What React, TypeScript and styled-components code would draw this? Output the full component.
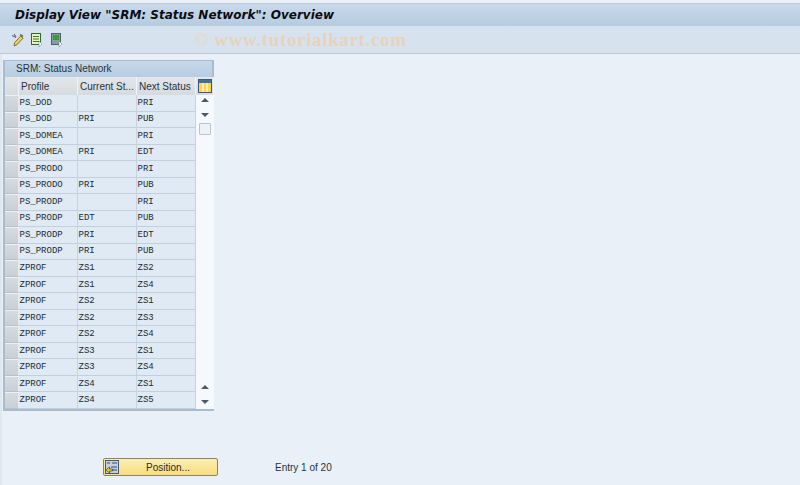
import styled, { createGlobalStyle } from "styled-components";

const GlobalStyle = createGlobalStyle`
  html, body {
    margin: 0;
    padding: 0;
    background: #e9f0f7;
    font-family: "Liberation Sans", Arial, sans-serif;
  }
`;

const rows = [
  ["PS_DOD", "", "PRI"],
  ["PS_DOD", "PRI", "PUB"],
  ["PS_DOMEA", "", "PRI"],
  ["PS_DOMEA", "PRI", "EDT"],
  ["PS_PRODO", "", "PRI"],
  ["PS_PRODO", "PRI", "PUB"],
  ["PS_PRODP", "", "PRI"],
  ["PS_PRODP", "EDT", "PUB"],
  ["PS_PRODP", "PRI", "EDT"],
  ["PS_PRODP", "PRI", "PUB"],
  ["ZPROF", "ZS1", "ZS2"],
  ["ZPROF", "ZS1", "ZS4"],
  ["ZPROF", "ZS2", "ZS1"],
  ["ZPROF", "ZS2", "ZS3"],
  ["ZPROF", "ZS2", "ZS4"],
  ["ZPROF", "ZS3", "ZS1"],
  ["ZPROF", "ZS3", "ZS4"],
  ["ZPROF", "ZS4", "ZS1"],
  ["ZPROF", "ZS4", "ZS5"],
];

const Screen = styled.div`
  width: 800px;
  height: 485px;
  overflow: hidden;
  display: flex;
  flex-direction: column;
  padding-top: 3px;
  box-sizing: border-box;
  background: #e9f0f7;
`;

const TitleBar = styled.div`
  height: 23px;
  flex: none;
  display: flex;
  align-items: center;
  padding-left: 15px;
  border-top: 1px solid #c3ccd6;
  box-sizing: border-box;
  background: linear-gradient(#c8d9ea, #b5cbe0);
`;

const Title = styled.h1`
  margin: 0;
  font: italic bold 12px "DejaVu Sans", Verdana, sans-serif;
  color: #0c0c10;
  white-space: nowrap;
`;

const Toolbar = styled.div`
  height: 28px;
  flex: none;
  display: flex;
  align-items: center;
  padding-left: 11px;
  gap: 6px;
  box-sizing: border-box;
  border-bottom: 1px solid #bcc8d3;
  background: #d6e2ee;
`;

const ToolIcon = styled.svg`
  width: 14px;
  height: 14px;
  flex: none;
`;

const Watermark = styled.span`
  margin-left: 123px;
  font: bold 19px "Liberation Serif", "Times New Roman", serif;
  letter-spacing: 0.65px;
  color: #e8d3ba;
  white-space: nowrap;
`;

const Copyright = styled.span`
  color: #e6d9c8;
`;

const Content = styled.main`
  flex: 1;
  min-height: 0;
  display: flex;
  flex-direction: column;
  align-items: flex-start;
  padding: 6px 0 0 3px;
  border-left: 2px solid #dfe7ef;
  box-sizing: border-box;
`;

const Panel = styled.section`
  width: 211px;
  height: 351px;
  margin-left: -2px;
  flex: none;
  display: flex;
  flex-direction: column;
  box-sizing: border-box;
  border: 1px solid #a9bccd;
  border-width: 1px 2px 2px 2px;
  background: #f2f6fa;
`;

const PanelTitle = styled.div`
  height: 16px;
  flex: none;
  display: flex;
  align-items: center;
  padding: 0 0 2px 11px;
  box-sizing: border-box;
  font-size: 10px;
  color: #27323d;
  background: linear-gradient(#c6d8e9, #b7cde2);
`;

const TableGrid = styled.div`
  flex: 1;
  min-height: 0;
  display: grid;
  grid-template-columns: 14px 59px 59px 59px 18px;
  grid-template-rows: 18px repeat(19, 1fr);
`;

const HeaderCell = styled.div<{ $corner?: boolean }>`
  display: flex;
  align-items: center;
  padding-left: ${(p) => (p.$corner ? 0 : "2px")};
  font-size: 10px;
  color: #27323d;
  white-space: nowrap;
  overflow: hidden;
  box-sizing: border-box;
  border-right: 1px solid #f1f4f7;
  background: linear-gradient(#e3e7eb, #d6dbe0);
`;

const RowHead = styled.div`
  box-sizing: border-box;
  border-top: 1px solid #eef1f4;
  border-bottom: 1px solid #b6c3cf;
  border-right: 1px solid #e6ebf0;
  background: linear-gradient(#d6dbe0, #c9cfd5);
`;

const Cell = styled.div`
  display: flex;
  align-items: center;
  padding-left: 0.5px;
  box-sizing: border-box;
  font: 9px "Liberation Mono", "Courier New", monospace;
  color: #202a33;
  white-space: nowrap;
  border-right: 1px solid #c6d4e0;
  border-bottom: 1px solid #c0d0de;
  background: #dfeaf4;
`;

const ScrollColumn = styled.div`
  grid-column: 5;
  grid-row: 2 / span 19;
  display: flex;
  flex-direction: column;
  align-items: center;
  background: #f6f9fb;
`;

const ColumnSetup = styled.svg`
  width: 14px;
  height: 14px;
  margin: 0 0 0 2px;
`;

const ScrollArrow = styled.div<{ $down?: boolean }>`
  width: 0;
  height: 0;
  margin-top: ${(p) => (p.$down ? "11px" : "3px")};
  border-left: 4px solid transparent;
  border-right: 4px solid transparent;
  ${(p) =>
    p.$down ? "border-top: 4px solid #4d5a66;" : "border-bottom: 4px solid #4d5a66;"}
`;

const ScrollThumb = styled.div`
  width: 12px;
  height: 12px;
  margin-top: 6px;
  box-sizing: border-box;
  border: 1px solid #b8c4cf;
  border-radius: 1px;
  background: #eef2f6;
`;

const ScrollSpacer = styled.div`
  flex: 1;
`;

const ScrollFoot = styled.div`
  flex: 0 0 5px;
`;

const Footer = styled.div`
  display: flex;
  align-items: center;
  margin-top: 47px;
  margin-left: 98px;
`;

const PositionButton = styled.button`
  width: 115px;
  height: 18px;
  padding: 0;
  display: flex;
  align-items: center;
  box-sizing: border-box;
  border: 1px solid #8c8465;
  border-radius: 2px;
  background: linear-gradient(#fbeeb4, #f9dd7e);
  font: 10px "Liberation Sans", Arial, sans-serif;
  color: #2b2b2b;
`;

const ButtonIcon = styled.svg`
  width: 14px;
  height: 14px;
  margin-left: 1px;
  flex: none;
`;

const ButtonLabel = styled.span`
  flex: 1;
  text-align: center;
`;

const EntryCount = styled.span`
  margin-left: 57px;
  font-size: 10px;
  color: #27323d;
`;

const SheetIcon = () => (
  <ToolIcon viewBox="0 0 14 14">
    <rect x="0.500" y="0.500" width="9" height="11" fill="#e6f0c4" stroke="#2f6a2a" />
    <path d="M2 3.500h6M2 6h6M2 8.500h6" stroke="#3f7a32" />
    <path d="M8 8l3 3-3 3z" fill="#ffffff" stroke="#6b7885" strokeWidth="0.5" />
  </ToolIcon>
);

const FilledSheetIcon = () => (
  <ToolIcon viewBox="0 0 14 14">
    <rect x="0.500" y="0.500" width="9" height="11" fill="#8a9aa6" stroke="#52616e" />
    <rect x="2" y="2" width="6" height="5" fill="#3f9a35" />
    <path d="M8 8l3 3-3 3z" fill="#ffffff" stroke="#6b7885" strokeWidth="0.5" />
  </ToolIcon>
);

export default function App() {
  return (
    <Screen>
      <GlobalStyle />
      <TitleBar>
        <Title>Display View "SRM: Status Network": Overview</Title>
      </TitleBar>
      <Toolbar>
        <ToolIcon viewBox="0 0 14 14">
          <path d="M1 2.500l4 2M3 1l2 3" stroke="#6a6f75" strokeWidth="1.200" />
          <path d="M9 1.500l3 2" stroke="#70757b" strokeWidth="1.800" />
          <path d="M3 13l.7-3.500 6-6.500 2.500 2-6 6.500z" fill="#f0cf55" stroke="#6a5a20" strokeWidth="0.8" />
        </ToolIcon>
        <SheetIcon />
        <FilledSheetIcon />
        <Watermark>
          <Copyright>©</Copyright> www.tutorialkart.com
        </Watermark>
      </Toolbar>
      <Content>
        <Panel>
          <PanelTitle>SRM: Status Network</PanelTitle>
          <TableGrid>
            <HeaderCell $corner />
            <HeaderCell>Profile</HeaderCell>
            <HeaderCell>Current St...</HeaderCell>
            <HeaderCell>Next Status</HeaderCell>
            <HeaderCell $corner>
              <ColumnSetup viewBox="0 0 14 14">
                <rect x="0.500" y="0.500" width="13" height="13" fill="#f6d65a" stroke="#3d5a78" />
                <rect x="1" y="1" width="12" height="3" fill="#3f6ea0" />
                <path d="M5 4v9M9 4v9" stroke="#ffffff" />
              </ColumnSetup>
            </HeaderCell>
            {rows.map((row, i) => (
              <div key={i} style={{ display: "contents" }}>
                <RowHead />
                {row.map((value, j) => (
                  <Cell key={j}>{value}</Cell>
                ))}
              </div>
            ))}
            <ScrollColumn>
              <ScrollArrow />
              <ScrollArrow $down />
              <ScrollThumb />
              <ScrollSpacer />
              <ScrollArrow />
              <ScrollArrow $down />
              <ScrollFoot />
            </ScrollColumn>
          </TableGrid>
        </Panel>
        <Footer>
          <PositionButton>
            <ButtonIcon viewBox="0 0 14 14">
              <rect x="0.500" y="0.500" width="13" height="13" fill="#c3d0de" stroke="#4a5a6a" />
              <path d="M2 3h3M7 3h5M6 7h6M6 10h6" stroke="#2f4f7a" />
              <path d="M1 10l3.500-3v2h3v2h-3v2z" fill="#f2d21f" stroke="#222" strokeWidth="0.6" />
            </ButtonIcon>
            <ButtonLabel>Position...</ButtonLabel>
          </PositionButton>
          <EntryCount>Entry 1 of 20</EntryCount>
        </Footer>
      </Content>
    </Screen>
  );
}
